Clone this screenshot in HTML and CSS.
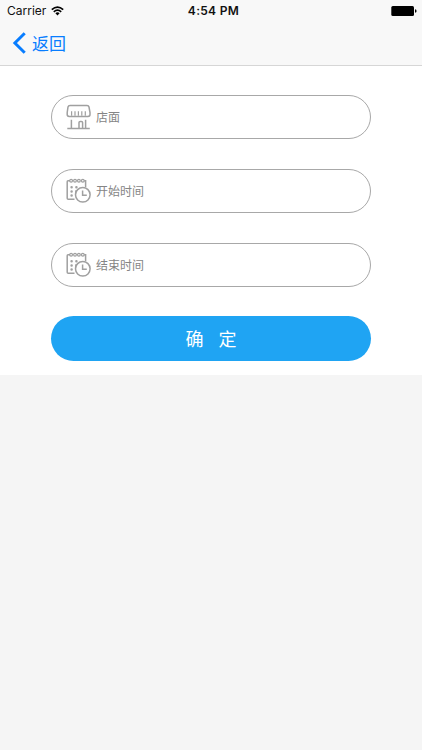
FILE: index.html
```
<!DOCTYPE html>
<html lang="zh-CN">
<head>
<meta charset="utf-8">
<title>查询</title>
<link rel="stylesheet" href="styles.css">
</head>
<body>
<header class="top">
  <div class="status">
    <div class="carrier"><span>Carrier</span>
      <svg class="wifi" width="13" height="10" viewBox="0 0 13 10" fill="none" stroke="#000" stroke-width="1.7"><path d="M.8 3.7Q6.5-1.5 12.2 3.7M2.8 5.8Q6.5 2.5 10.2 5.8"/><path d="M4.4 7.2Q6.5 5.5 8.6 7.2L6.5 9.4Z" fill="#000" stroke="none"/></svg>
    </div>
    <div class="time">4:54 PM</div>
    <div class="power"><svg width="26" height="10" viewBox="0 0 26 10"><rect x=".3" y="0" width="22.7" height="10" rx="1.5"/><path d="M24 3.2Q25.6 3.5 25.6 5T24 6.8Z"/></svg></div>
  </div>
  <nav class="nav">
    <svg width="14" height="22" viewBox="0 0 14 22" fill="none" stroke="#087dff" stroke-width="3"><path d="M12.7 1.2 2.9 11l9.8 9.8"/></svg>
    <span>返回</span>
  </nav>
</header>
<main class="form">
  <div class="field">
    <svg class="icon" width="26" height="28" viewBox="0 0 26 28"><path d="M4 2.5H21Q22.7 2.5 23 4L24 9.5V11.5Q24 13.4 22 13.4H3.2Q1.2 13.4 1.2 11.5V9.5L2 4Q2.4 2.5 4 2.5Z"/><path class="stripes" d="M5.6 8.2v4.6M9 8.2v4.6M12.4 8.2v4.6M15.8 8.2v4.6M19.3 8.2v4.6"/><path d="M5.4 16.7V25.5M19.6 16.7V25.5M1.3 25.6H23.8M13 25.5V19.6Q13 18.4 14.2 18.4H15.4Q16.6 18.4 16.6 19.6V25.5"/></svg>
    <span>店面</span>
  </div>
  <div class="field">
    <svg class="icon" width="26" height="28" viewBox="0 0 26 28"><use href="#calendar"/></svg>
    <span>开始时间</span>
  </div>
  <div class="field">
    <svg class="icon" width="26" height="28" viewBox="0 0 26 28"><g id="calendar"><path d="M4 3.8H2Q1.2 3.8 1.2 4.8V21.2Q1.2 22.2 2.2 22.2H8.5M18.2 3.8H19.6V10"/><g class="rings"><circle cx="5.1" cy="3.8" r="1.4"/><circle cx="9" cy="3.8" r="1.4"/><circle cx="12.9" cy="3.8" r="1.4"/><circle cx="16.8" cy="3.8" r="1.4"/></g><path class="dots" d="M5.6 10.3h.01M10.4 10.3h.01M5.6 14.5h.01M10.3 14.2h.01M5.6 18.5h.01"/><circle class="clock" cx="16.8" cy="17.8" r="7.3"/><path d="M16.6 13.6V18.3H20.8"/></g></svg>
    <span>结束时间</span>
  </div>
  <button class="submit">确<span class="gap"></span>定</button>
</main>
</body>
</html>
```
FILE: styles.css
```
* { box-sizing: border-box; }
body {
  margin: 0;
  min-height: 750px;
  background: #f5f5f5;
  font-family: Inter, "Noto Sans CJK SC", sans-serif;
}
.top {
  height: 66px;
  background: #f8f8f8;
  border-bottom: 1px solid #d6d6d6;
}
.status {
  height: 21px;
  display: grid;
  grid-template-columns: 1fr auto 1fr;
  align-items: center;
  padding: 0 5px 0 7px;
  font-size: 12px;
  color: #111;
}
.carrier { display: flex; align-items: center; gap: 5px; }
.time { font-weight: 600; letter-spacing: .3px; padding-left: 3px; }
.power { display: flex; justify-content: flex-end; }
.nav {
  height: 43px;
  display: flex;
  align-items: center;
  gap: 6px;
  padding-left: 12px;
  font-size: 17px;
  color: #087dff;
}
.form {
  height: 309px;
  display: flex;
  flex-direction: column;
  gap: 30px;
  padding: 29px 51px 0;
  background: #fff;
}
.field {
  height: 44px;
  display: flex;
  align-items: center;
  gap: 4px;
  padding-left: 14px;
  border: 1px solid #a8a8a8;
  border-radius: 22px;
  font-size: 12px;
  line-height: 18px;
  color: #858585;
}
.field span { padding-top: 1px; }
.icon { fill: none; stroke: #a0a0a0; stroke-width: 1.5; }
.stripes, .rings { stroke-width: 1.2; }
.dots { stroke-width: 2.5; stroke-linecap: round; }
.clock { fill: #fff; }
.submit {
  height: 45px;
  margin-top: -1px;
  padding: 0 0 2px;
  border: 0;
  border-radius: 23px;
  background: #1fa4f3;
  color: #fff;
  font: 18px "Noto Sans CJK SC", sans-serif;
}
.gap { display: inline-block; width: 15px; }
```
